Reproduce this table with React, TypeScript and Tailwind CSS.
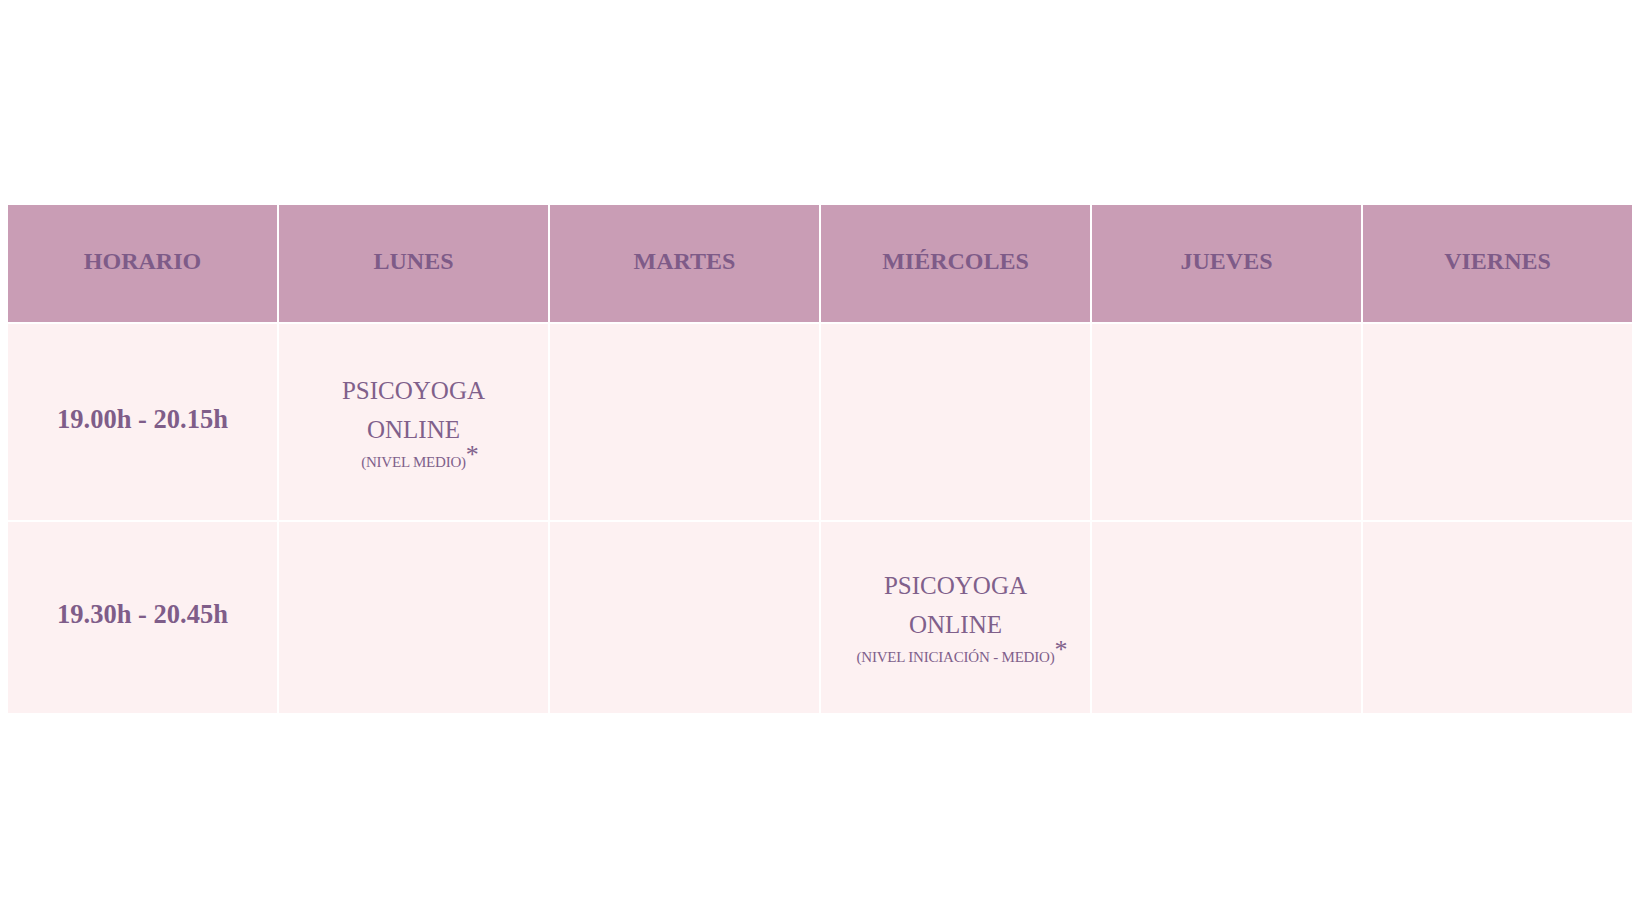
const days = ['HORARIO', 'LUNES', 'MARTES', 'MIÉRCOLES', 'JUEVES', 'VIERNES'];

type Slot = { time: string; day: number; level: string };

const rows: Slot[] = [
  { time: '19.00h - 20.15h', day: 1, level: '(NIVEL MEDIO)' },
  { time: '19.30h - 20.45h', day: 3, level: '(NIVEL INICIACIÓN - MEDIO)' },
];

function ClassCell({ level }: { level: string }) {
  return (
    <div className="flex flex-col items-center pb-[3px] text-center text-[#80608b]">
      <span className="text-[25px] leading-[39px]">PSICOYOGA</span>
      <span className="text-[25px] leading-[39px]">ONLINE</span>
      <span className="relative mt-[4px] text-[15px] leading-[18px] tracking-[-0.2px]">
        {level}
        {/* asterisk hangs past the centred label */}
        <span className="absolute -top-[11px] left-full text-[26px] leading-none">*</span>
      </span>
    </div>
  );
}

export default function App() {
  return (
    <div
      className="min-h-screen bg-white px-2 pt-[205px]"
      style={{ fontFamily: '"Liberation Serif", "DejaVu Serif", serif' }}
    >
      <div className="grid grid-cols-6 gap-[2px] bg-white">
        {days.map((d) => (
          <div
            key={d}
            className="flex h-[117px] items-center justify-center bg-[#c99db5] pb-[6px] text-[24px] font-bold text-[#7e5b88]"
          >
            {d}
          </div>
        ))}
        {rows.map((r, i) => (
          <div key={r.time} className="contents">
            <div
              className={`flex items-center justify-center bg-[#fdf1f2] pb-[5px] text-[26.5px] font-bold text-[#7f5d89] ${
                i === 0 ? 'h-[196px]' : 'h-[191px]'
              }`}
            >
              {r.time}
            </div>
            {[1, 2, 3, 4, 5].map((c) => (
              <div key={c} className="flex items-center justify-center bg-[#fdf1f2]">
                {c === r.day && <ClassCell level={r.level} />}
              </div>
            ))}
          </div>
        ))}
      </div>
    </div>
  );
}
